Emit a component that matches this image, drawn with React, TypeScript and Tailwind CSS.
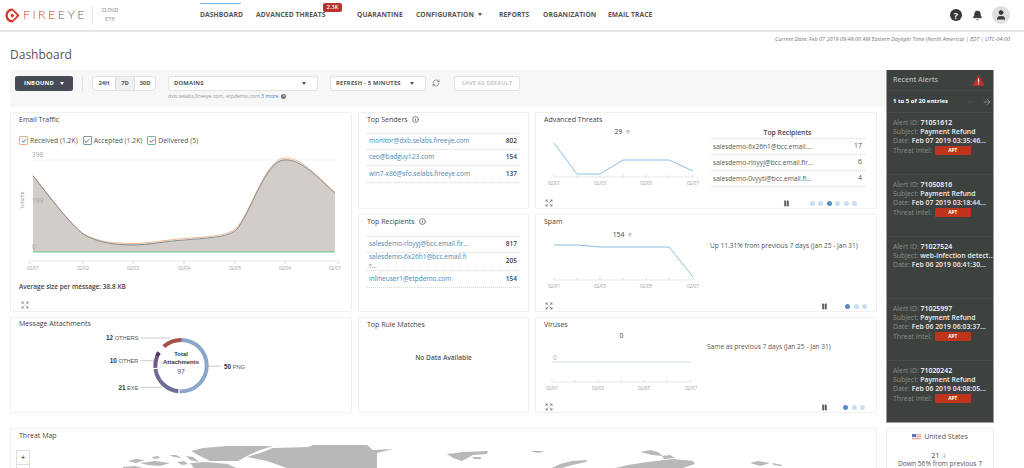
import React from "react";
import { Expand, Pause, ArrowUp, ArrowDown, ArrowLeft, ArrowRight, Bell, User, RefreshCw, Check, Info } from "lucide-react";

const font = "font-['Open_Sans',sans-serif]";

function Caret({ cls = "border-t-[#555]" }: { cls?: string }) {
  return <span className={`inline-block w-0 h-0 border-x-[2.5px] border-x-transparent border-t-[3px] ${cls}`} />;
}

function Card({ title, className = "", children }: { title?: React.ReactNode; className?: string; children?: React.ReactNode }) {
  return (
    <div className={`relative bg-white border border-[#f0f0f0] rounded-[1px] flex flex-col ${className}`}>
      {title && <div className="h-[17px] pb-[4px] px-[8px] text-[7px] leading-[10px] text-[#444] font-medium flex items-center gap-[4px] whitespace-nowrap">{title}</div>}
      {children}
    </div>
  );
}

function Dots({ n, active }: { n: number; active: number }) {
  return (
    <div className="flex gap-[3.5px]">
      {Array.from({ length: n }).map((_, i) => (
        <span key={i} className={i === active ? "w-[5px] h-[5px] rounded-full bg-[#5b8cc4]" : "w-[5px] h-[5px] rounded-full bg-[#c9dff2]"} />
      ))}
    </div>
  );
}

function Foot({ n, active, cls }: { n: number; active: number; cls: string }) {
  return (
    <div className="absolute left-[9px] right-[8px] bottom-[1px] flex items-center justify-between text-[#555]">
      <Expand size={8} strokeWidth={1.6} />
      <div className={`flex items-center ${cls}`}>
        <Pause size={7} strokeWidth={1.5} fill="currentColor" />
        <Dots n={n} active={active} />
      </div>
    </div>
  );
}

function Row({ name, n, className = "" }: { name: React.ReactNode; n: string; className?: string }) {
  return (
    <div className={`flex items-center justify-between border-b border-dotted border-[#d8d8d8] px-[2px] text-[6.55px] leading-[8.5px] ${className}`}>
      <span className="text-[#4b87b5] w-[125px]">{name}</span>
      <span className="font-semibold text-[#444] pr-[1px]">{n}</span>
    </div>
  );
}

function Alert({ id, subject, date, apt = true }: { id: string; subject: string; date: string; apt?: boolean }) {
  return (
    <div className="h-[62px] px-[6px] pt-[5px] border-b border-[#464b48] text-[6.9px] leading-[9.2px] text-[#888d8a] whitespace-nowrap">
      <div>Alert ID: <span className="text-white font-semibold">{id}</span></div>
      <div>Subject: <span className="text-[#ececec] font-semibold">{subject}</span></div>
      <div>Date: <span className="text-[#ececec] font-semibold">{date}</span></div>
      {apt && (
        <div className="flex items-center gap-[2px] h-[9.2px]">
          Threat Intel:
          <span className="ml-[1px] w-[36px] h-[9px] rounded-[1px] bg-[#c0341d] text-white text-[4.8px] font-bold flex items-center justify-center">APT</span>
        </div>
      )}
    </div>
  );
}

function SelectBox({ label, className = "" }: { label: string; className?: string }) {
  return (
    <div className={`h-[15px] bg-white border border-[#e3e3e3] rounded-[2px] flex items-center justify-between pl-[5px] pr-[11px] text-[5.8px] font-bold text-[#555] tracking-[0.2px] ${className}`}>
      {label}
      <Caret />
    </div>
  );
}

function Axis({ y, x0, step, last }: { y: number; x0: number; step: number; last: number }) {
  const xs = [0, 1, 2, 3, 4, 5].map((i) => x0 + i * step).concat(last);
  return (
    <>
      <line x1={x0} x2={last} y1={y} y2={y} stroke="#ddd" strokeWidth="0.7" />
      {xs.map((x) => <line key={x} x1={x} x2={x} y1={y - 2} y2={y} stroke="#ccc" strokeWidth="0.7" />)}
      {["02/01", "02/03", "02/05", "02/07"].map((t, i) => (
        <text key={t} x={xs[i * 2]} y={y + 8} fontSize="4.6" textAnchor="middle" fill="#9a9a9a">{t}</text>
      ))}
    </>
  );
}

export default function App() {
  return (
    <div className={`w-[1024px] h-[468px] overflow-hidden bg-white ${font}`}>
      {/* header */}
      <header className="h-[32px] flex items-center border-b-2 border-[#e6e6e6] bg-white">
        <div className="w-[93px] flex items-center pl-[5px] border-r border-[#e6e6e6] h-[20px]">
          <svg width="15" height="15" viewBox="0 0 16 16" className="shrink-0">
            <path d="M8 0.6 L15.6 8 L8 15.4 C3.4 15.4 0.6 12 0.6 8 C0.6 4 3.4 0.6 8 0.6 Z M8 3 C4.9 3 3 5.4 3 8 C3 10.6 4.9 13 8 13 L12.8 8 Z" fill="#d9362b" fillRule="evenodd" />
            <path d="M8 6 L10 8 L8 10 C6.6 10 6 9 6 8 C6 7 6.6 6 8 6 Z" fill="#d9362b" />
          </svg>
          <span className="ml-[3px] text-[12.5px] leading-none tracking-[2.4px] font-light font-['Lato',sans-serif] whitespace-nowrap">
            <span className="text-[#d9362b]">FIRE</span><span className="text-[#666]">EYE</span>
          </span>
        </div>
        <div className="ml-[8px] w-[18px] flex flex-col items-center text-[#999] leading-[8px] -mt-[1px]">
          <span className="text-[4.8px] font-semibold">CLOUD</span>
          <span className="text-[6px] mt-[1px]">ETP</span>
        </div>
        <nav className="ml-[81px] flex items-center h-full text-[6.7px] font-bold text-[#555] tracking-[0.1px] whitespace-nowrap">
          <div className="relative w-[41px] text-center">
            <span className="absolute left-0 right-0 -top-[7px] h-[1px] bg-[#7fb8de]" />
            DASHBOARD
          </div>
          <div className="relative ml-[15px] w-[66px]">
            ADVANCED THREATS
            <span className="absolute left-[67px] -top-[7px] w-[19px] h-[9px] rounded-[2px] bg-[#b8342e] text-white text-[5.5px] font-semibold flex items-center justify-center">2.3K</span>
          </div>
          <div className="ml-[35px] w-[43px]">QUARANTINE</div>
          <div className="ml-[16px] w-[62px] flex items-center gap-[4px]">CONFIGURATION <Caret /></div>
          <div className="ml-[21px] w-[28px]">REPORTS</div>
          <div className="ml-[16px] w-[50px]">ORGANIZATION</div>
          <div className="ml-[15px] w-[42px]">EMAIL TRACE</div>
        </nav>
        <div className="ml-auto flex items-center pr-[14px] text-[#33393c]">
          <span className="w-[12px] h-[12px] rounded-full bg-[#33393c] text-white text-[9px] font-bold leading-none flex items-center justify-center">?</span>
          <Bell size={11} fill="#33393c" strokeWidth={1.5} className="ml-[10px]" />
          <span className="ml-[9px] w-[18px] h-[18px] rounded-full bg-[#dfdfdf] flex items-center justify-center">
            <User size={12} fill="#33393c" strokeWidth={1.5} />
          </span>
        </div>
      </header>

      <div className="h-[6px] mt-[1px] pr-[14px] flex items-center justify-end text-[5.5px] italic text-[#777] whitespace-nowrap">
        <span className="mt-[6px]">Current Date: Feb 07 2019 09:49:00 AM Eastern Daylight Time (North America) | EDT | UTC-04:00</span>
      </div>
      <h1 className="h-[31px] pl-[10px] pt-[6px] text-[12px] leading-[20px] text-[#555]">Dashboard</h1>

      {/* top area */}
      <div className="flex pl-[10px]">
        <div className="w-[876px]">
          {/* toolbar */}
          <div className="h-[37px] bg-[#f7f7f7] pl-[5px] pt-[6px] flex items-start">
            <div className="w-[58px] h-[15px] bg-[#474b55] rounded-[2px] flex items-center justify-center gap-[6px] text-white text-[5.8px] font-bold tracking-[0.2px]">
              INBOUND <Caret cls="border-t-white" />
            </div>
            <span className="ml-[9px] w-[1px] h-[15px] bg-[#e4e4e4]" />
            <div className="ml-[9px] flex h-[15px] text-[5.8px] font-bold text-[#555] bg-white border border-[#e3e3e3] rounded-[2px]">
              <span className="w-[22px] flex items-center justify-center">24H</span>
              <span className="w-[20px] flex items-center justify-center bg-[#f0f0f0] border-x border-[#dcdcdc]">7D</span>
              <span className="w-[20px] flex items-center justify-center">30D</span>
            </div>
            <div className="ml-[12px] relative">
              <SelectBox label="DOMAINS" className="w-[150px]" />
              <div className="absolute left-0 top-[16px] flex items-center gap-[3px] text-[5.2px] leading-[8px] text-[#999] whitespace-nowrap">
                <span>dxb.selabs.fireeye.com, etpdemo.com <span className="text-[#3f7fc0]">3 more</span></span>
                <span className="w-[5px] h-[5px] rounded-full bg-[#777] text-white text-[4px] leading-none flex items-center justify-center">×</span>
              </div>
            </div>
            <SelectBox label="REFRESH - 5 MINUTES" className="ml-[12px] w-[96px]" />
            <RefreshCw size={8} strokeWidth={1.6} className="ml-[6px] mt-[3px] text-[#555]" />
            <div className="ml-[14px] w-[66px] h-[15px] bg-white border border-[#e3e3e3] rounded-[2px] flex items-center justify-center text-[5.5px] font-bold text-[#c4c4c4] tracking-[0.2px]">
              SAVE AS DEFAULT
            </div>
          </div>

          {/* grid */}
          <div className="mt-[5px] grid grid-cols-[342px_171px_342px] grid-rows-[97px_98px_96px] gap-x-[6px] gap-y-[5px]">
            <Card title="Email Traffic" className="row-span-2">
              <div className="mt-[6px] px-[8px] flex items-center gap-[5px] text-[6.8px] leading-[9px] text-[#555]">
                {[
                  ["Received (1.2K)", "border-[#eeb083]"],
                  ["Accepted (1.2K)", "border-[#7f98ab]"],
                  ["Delivered (5)", "border-[#6cc08e]"],
                ].map(([t, c]) => (
                  <span key={t} className="flex items-center gap-[2px]">
                    <span className={`w-[9px] h-[9px] border ${c} rounded-[1px] flex items-center justify-center`}>
                      <Check size={6} strokeWidth={3} className="text-[#333]" />
                    </span>
                    {t}
                  </span>
                ))}
              </div>
              <svg width="340" height="126" viewBox="11 146 340 126" className="block mt-[1px]">
                <line x1="33" x2="338" y1="160" y2="160" stroke="#f3f3f3" strokeWidth="0.7" />
                <path d="M33 176 C50 197 68 222 83 234 C98 243 115 244 133 244 C150 244 165 241 184 240 C205 238 225 238 235 231 C250 217 265 159 285 159 C302 158 320 180 335 193 L335 252 L33 252 Z" fill="#d2cdc8" />
                <path d="M33 175.5 C50 196.5 68 221.5 83 233.5 C98 242.5 115 243.5 133 243.5 C150 243.5 165 240 184 238.5 C205 237 225 236.5 235 229.5 C250 216 265 158 285 158 C302 157 320 179.5 335 192.5" fill="none" stroke="#efb78f" strokeWidth="1" />
                <path d="M33 176 C50 197 68 222 83 234 C98 243 115 245 133 245 C150 245 165 241 184 240 C205 238 225 238 235 231 C250 217 265 159 285 160 C302 159 320 180 335 193" fill="none" stroke="#6f7f88" strokeWidth="0.8" />
                <line x1="33" x2="335" y1="252" y2="252" stroke="#6cc08e" strokeWidth="1" />
                <g fontSize="6.5" fill="#a5a5a5">
                  <text x="32" y="157">398</text>
                  <text x="32" y="203">199</text>
                  <text x="32" y="249">0</text>
                </g>
                <text x="24" y="200" fontSize="4.8" fill="#888" textAnchor="middle" transform="rotate(-90 24 200)">Volume</text>
                <line x1="30" x2="338" y1="261" y2="261" stroke="#ddd" strokeWidth="0.7" />
                {[30, 83, 133, 184, 235, 285, 338].map((x) => <line key={x} x1={x} x2={x} y1="261" y2="264" stroke="#ccc" strokeWidth="0.7" />)}
                {[["02/01", 33], ["02/02", 83], ["02/03", 133], ["02/04", 184], ["02/05", 235], ["02/06", 285], ["02/07", 335]].map(([t, x]) => (
                  <text key={t as string} x={x as number} y="270" fontSize="4.6" fill="#9a9a9a" textAnchor="middle">{t}</text>
                ))}
              </svg>
              <div className="mt-[10px] px-[8px] text-[6.5px] leading-[9px] font-semibold text-[#444]">Average size per message: 38.8 KB</div>
              <div className="absolute left-[10px] bottom-[2px] text-[#666]"><Expand size={8} strokeWidth={1.6} /></div>
            </Card>

            <Card title={<>Top Senders <Info size={7} strokeWidth={2.5} className="text-[#555]" /></>}>
              <div className="mt-[3px] mx-[8px] border-t border-dotted border-[#d8d8d8]">
                <Row name="monitor@dxb.selabs.fireeye.com" n="802" className="h-[16px]" />
                <Row name="ceo@badguy123.com" n="154" className="h-[16px]" />
                <Row name="win7-x86@sfo.selabs.fireeye.com" n="137" className="h-[17px]" />
              </div>
            </Card>

            <Card title="Advanced Threats">
              <div className="flex">
                <div className="w-[174px]">
                  <div className="h-[8px] -mt-[2px] text-center text-[6.8px] leading-[8px] text-[#444] flex items-center justify-center gap-[3px]">29 <ArrowUp size={6} strokeWidth={1.5} /></div>
                  <svg width="174" height="52" viewBox="535 136 174 52" className="block">
                    <polyline points="553,143 576,174 599,174 622,160 645,160 668,160 692,171" fill="none" stroke="#8fbde3" strokeWidth="1" />
                    <Axis y={177} x0={553} step={23} last={692} />
                  </svg>
                </div>
                <div className="w-[155px] -mt-[2px]">
                  <div className="h-[9px] text-center text-[6.8px] leading-[9px] font-semibold text-[#444]">Top Recipients</div>
                  <div className="mt-[1px] border-t border-dotted border-[#d8d8d8] text-[6.6px] text-[#555]">
                    {[["salesdemo-6x26h1@bcc.email....", "17"], ["salesdemo-rloyyj@bcc.email.fir...", "6"], ["salesdemo-0vyytl@bcc.email.fi...", "4"]].map(([a, b]) => (
                      <div key={a} className="h-[16px] flex items-center justify-between px-[3px] border-b border-dotted border-[#d8d8d8]">
                        <span>{a}</span><span className="text-[7px]">{b}</span>
                      </div>
                    ))}
                  </div>
                </div>
              </div>
              <Foot n={6} active={2} cls="gap-[20px] mr-[11px]" />
            </Card>

            <Card title={<>Top Recipients <Info size={7} strokeWidth={2.5} className="text-[#555]" /></>}>
              <div className="mt-[4px] mx-[8px] border-t border-dotted border-[#d8d8d8]">
                <Row name="salesdemo-rloyyj@bcc.email.fir..." n="817" className="h-[16px]" />
                <Row name={<>salesdemo-6x26h1@bcc.email.fi<br />r...</>} n="205" className="h-[18px]" />
                <Row name="inlineuser1@etpdemo.com" n="154" className="h-[17px]" />
              </div>
            </Card>

            <Card title="Spam">
              <div className="flex">
                <div className="w-[174px]">
                  <div className="h-[8px] -mt-[1px] text-center text-[6.8px] leading-[8px] text-[#444] flex items-center justify-center gap-[3px]">154 <ArrowUp size={6} strokeWidth={1.5} /></div>
                  <svg width="174" height="52" viewBox="535 239 174 52" className="block">
                    <polyline points="553,245 576,245 599,247 622,247 645,247 668,247 692,277" fill="none" stroke="#8fbde3" strokeWidth="1" />
                    <Axis y={280} x0={553} step={23} last={692} />
                  </svg>
                </div>
                <div className="pt-[9px] text-[6.6px] leading-[9px] text-[#555] whitespace-nowrap">Up 11.31% from previous 7 days (Jan 25 - Jan 31)</div>
              </div>
              <Foot n={3} active={0} cls="gap-[17px] mr-[1px]" />
            </Card>

            <Card title="Message Attachments">
              <svg width="340" height="78" viewBox="11 336 340 78" className="block">
                <g fill="none" strokeWidth="4">
                  <circle cx="181" cy="367" r="26" stroke="#8aa6c9" pathLength="97" strokeDasharray="49.4 47.6" transform="rotate(-90 181 367)" />
                  <circle cx="181" cy="367" r="26" stroke="#6f6c96" pathLength="97" strokeDasharray="20.6 76.4" transform="rotate(96 181 367)" />
                  <circle cx="181" cy="367" r="26" stroke="#75578a" pathLength="97" strokeDasharray="7 90" transform="rotate(175 181 367)" />
                  <circle cx="181" cy="367" r="26" stroke="#4c3560" pathLength="97" strokeDasharray="2.8 94.2" transform="rotate(201 181 367)" />
                  <circle cx="181" cy="367" r="26" stroke="#a8504a" pathLength="97" strokeDasharray="11.6 85.4" transform="rotate(228 181 367)" />
                </g>
                <g stroke="#bbb" strokeWidth="0.8">
                  <line x1="140" x2="170" y1="339" y2="339" />
                  <line x1="140" x2="154" y1="362" y2="362" />
                  <line x1="140" x2="162" y1="389" y2="389" />
                  <line x1="208" x2="221" y1="367.5" y2="367.5" />
                </g>
                <g fontFamily="Liberation Sans, sans-serif" fontSize="5.8" fill="#555">
                  <text x="138" y="341.5" textAnchor="end"><tspan fontWeight="700" fontSize="6.4" fill="#333">12</tspan> OTHERS</text>
                  <text x="138" y="364.5" textAnchor="end"><tspan fontWeight="700" fontSize="6.4" fill="#333">10</tspan> OTHER</text>
                  <text x="138" y="391.5" textAnchor="end"><tspan fontWeight="700" fontSize="6.4" fill="#333">21</tspan> EXE</text>
                  <text x="224.5" y="370" textAnchor="start"><tspan fontWeight="700" fontSize="6.4" fill="#333">50</tspan> PNG</text>
                  <text x="181" y="357" textAnchor="middle" fontWeight="700" fontSize="6" fill="#333">Total</text>
                  <text x="181" y="365" textAnchor="middle" fontWeight="700" fontSize="6" fill="#333">Attachments</text>
                  <text x="181" y="375" textAnchor="middle" fontSize="7" fill="#555">97</text>
                </g>
              </svg>
            </Card>

            <Card title="Top Rule Matches">
              <div className="mt-[18px] text-center text-[6.6px] leading-[9px] font-semibold text-[#555]">No Data Available</div>
            </Card>

            <Card title="Viruses">
              <div className="flex">
                <div className="w-[171px]">
                  <div className="h-[8px] -mt-[3px] text-center text-[6.8px] leading-[8px] text-[#444]">0</div>
                  <svg width="171" height="54" viewBox="536 341 171 54" className="block">
                    <text x="553" y="361" fontSize="6.5" fill="#aaa">0</text>
                    <line x1="552" x2="691" y1="363" y2="363" stroke="#bcd7ef" strokeWidth="0.8" />
                    <Axis y={383} x0={552} step={23} last={691} />
                  </svg>
                </div>
                <div className="pt-[7px] text-[6.6px] leading-[9px] text-[#555] whitespace-nowrap">Same as previous 7 days (Jan 25 - Jan 31)</div>
              </div>
              <Foot n={3} active={0} cls="gap-[15px] mr-[3px]" />
            </Card>
          </div>
        </div>

        {/* alerts */}
        <aside className="w-[108px] h-[353px] bg-[#3d423f] border border-[#9a9d9b] border-t-0 overflow-hidden">
          <div className="h-[21px] px-[6px] flex items-center justify-between border-b border-[#464b48]">
            <span className="text-[7px] font-semibold text-[#b4b7b5]">Recent Alerts</span>
            <svg width="13" height="11" viewBox="0 0 13 11" className="mr-[2px]">
              <path d="M6.5 0.3 L12.8 10.7 L0.2 10.7 Z" fill="#c9302c" />
              <rect x="6" y="3.5" width="1" height="4" fill="#fff" />
              <rect x="6" y="8.4" width="1" height="1" fill="#fff" />
            </svg>
          </div>
          <div className="h-[22px] pl-[6px] pr-[1px] flex items-center justify-between border-b border-[#464b48]">
            <span className="text-[6px] font-bold text-white">1 to 5 of 20 entries</span>
            <span className="flex items-center gap-[6px]">
              <ArrowLeft size={10} strokeWidth={1.2} className="text-[#5c615e]" />
              <ArrowRight size={10} strokeWidth={1.2} className="text-[#c4c6c5]" />
            </span>
          </div>
          <Alert id="71051612" subject="Payment Refund" date="Feb 07 2019 03:35:46..." />
          <Alert id="71050816" subject="Payment Refund" date="Feb 07 2019 03:18:44..." />
          <Alert id="71027524" subject="web-infection detect..." date="Feb 06 2019 06:41:30..." apt={false} />
          <Alert id="71025997" subject="Payment Refund" date="Feb 06 2019 06:03:37..." />
          <Alert id="71020242" subject="Payment Refund" date="Feb 06 2019 04:08:05..." />
        </aside>
      </div>

      {/* bottom */}
      <div className="flex pl-[10px] mt-[5px]">
        <Card title="Threat Map" className="w-[867px] h-[60px] overflow-hidden border-b-0">
          <svg width="865" height="30" viewBox="11 445 865 30" className="absolute left-0 top-[16px]">
            <g fill="#b8b8b8">
              <path d="M128 461 L136 459 L145 460 L136 463 Z" />
              <path d="M152 457 L158 456 L160 458 L154 459 Z" />
              <path d="M140 463 L155 461 L170 463 L160 466 L148 465 Z" />
              <path d="M169 455 L176 455 L182 458 L174 457 Z" />
              <path d="M177 462 L184 461 L188 464 L182 465 Z" />
              <path d="M123 467 L135 466 L143 468 L123 468 Z" />
              <path d="M186 456 L193 457 L199 462 L190 460 Z" />
              <path d="M191 451 L203 448 L227 446 L273 446 L260 450 L247 456 L238 461 L210 461 L200 456 Z" />
              <path d="M190 463 L205 462 L228 464 L236 468 L194 468 Z" />
              <path d="M247 457 L260 453 L273 448 L308 447 L313 445 L367 445 L373 450 L393 449 L377 453 L377 468 L287 468 L267 461 Z" />
              <path d="M447 454 L463 452 L488 451 L487 454 L473 455 L462 461 L453 458 Z" />
              <path d="M472 457 L482 457 L480 459 L474 459 Z" />
              <path d="M530 451 L545 451 L538 453 Z" />
              <path d="M552 468 L560 464 L572 461 L587 460 L586 462 L572 465 L562 468 Z" />
              <path d="M640 452 L650 450 L658 452 L663 456 L652 455 Z" />
              <path d="M662 456 L670 455 L675 458 L664 459 Z" />
              <path d="M615 468 L628 465 L647 462 L673 459 L693 461 L695 464 L683 468 Z" />
              <path d="M750 463 L758 461 L770 463 L760 466 Z" />
              <path d="M772 463 L783 465 L780 466 L774 465 Z" />
            </g>
          </svg>
          <div className="absolute left-[5px] top-[21px] w-[14px] h-[30px] bg-white border border-[#ddd] text-[7px] font-bold text-[#555] text-center leading-[13px]">
            <div className="h-[14px] border-b border-[#ddd]">+</div>
          </div>
        </Card>
        <div className="ml-[9px] w-[108px] h-[40px] bg-white border border-[#f0f0f0] border-b-0 flex flex-col items-center">
          <div className="mt-[3px] flex items-center gap-[3px] text-[7px] leading-[10px] font-medium text-[#555] whitespace-nowrap">
            <svg width="9" height="6" viewBox="0 0 9 6">
              <rect width="9" height="6" fill="#e8a5a5" />
              <rect y="1" width="9" height="1" fill="#f5e6e6" />
              <rect y="3" width="9" height="1" fill="#f5e6e6" />
              <rect y="5" width="9" height="1" fill="#f5e6e6" />
              <rect width="4" height="3" fill="#5a78b8" />
            </svg>
            United States
          </div>
          <div className="mt-[9px] flex items-center gap-[2px] text-[6.8px] leading-[9px] text-[#444]">21 <ArrowDown size={7} strokeWidth={1.5} className="text-[#999]" /></div>
          <div className="text-[6.7px] leading-[7px] text-[#555] whitespace-nowrap">Down 56% from previous 7</div>
        </div>
      </div>
    </div>
  );
}
